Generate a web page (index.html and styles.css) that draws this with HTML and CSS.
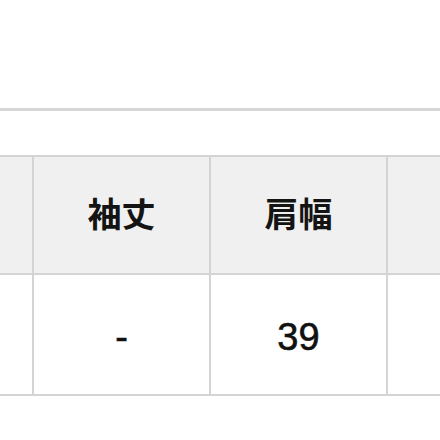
FILE: index.html
```html
<!DOCTYPE html>
<html lang="ja">
<head>
<meta charset="utf-8">
<link rel="stylesheet" href="styles.css">
</head>
<body>
<div class="page">
  <div class="top"></div>
  <div class="rule"></div>
  <div class="gap"></div>
  <table class="size-table">
    <tr class="head">
      <th></th>
      <th>袖丈</th>
      <th>肩幅</th>
      <th></th>
    </tr>
    <tr class="body">
      <td></td>
      <td>-</td>
      <td>39</td>
      <td></td>
    </tr>
  </table>
</div>
</body>
</html>
```

FILE: styles.css
```css
html, body {
  margin: 0;
  padding: 0;
  background: #ffffff;
}
.page {
  width: 440px;
  height: 440px;
  overflow: hidden;
  font-family: "Liberation Sans", "Noto Sans CJK JP", sans-serif;
  color: #141414;
}
.top {
  height: 108px;
}
.rule {
  height: 3px;
  background: #d6d6d6;
}
.gap {
  height: 44px;
}
.size-table {
  border-collapse: separate;
  border-spacing: 0;
  margin-left: -145px;
  table-layout: fixed;
  border-left: 2px solid #d4d4d4;
  border-top: 2px solid #d4d4d4;
}
.size-table th,
.size-table td {
  width: 175px;
  min-width: 175px;
  padding: 0;
  text-align: center;
  vertical-align: middle;
  border-right: 2px solid #d4d4d4;
  border-bottom: 2px solid #d4d4d4;
  box-sizing: content-box;
}
.size-table th {
  height: 116px;
  background: #f0f0f0;
  font-size: 34px;
  font-weight: 700;
  line-height: 1;
}
.size-table td {
  height: 114px;
  padding-top: 5px;
  background: #ffffff;
  font-size: 38px;
  font-weight: 400;
  line-height: 1;
  color: #111111;
  -webkit-text-stroke: 0.6px #111111;
}
```
